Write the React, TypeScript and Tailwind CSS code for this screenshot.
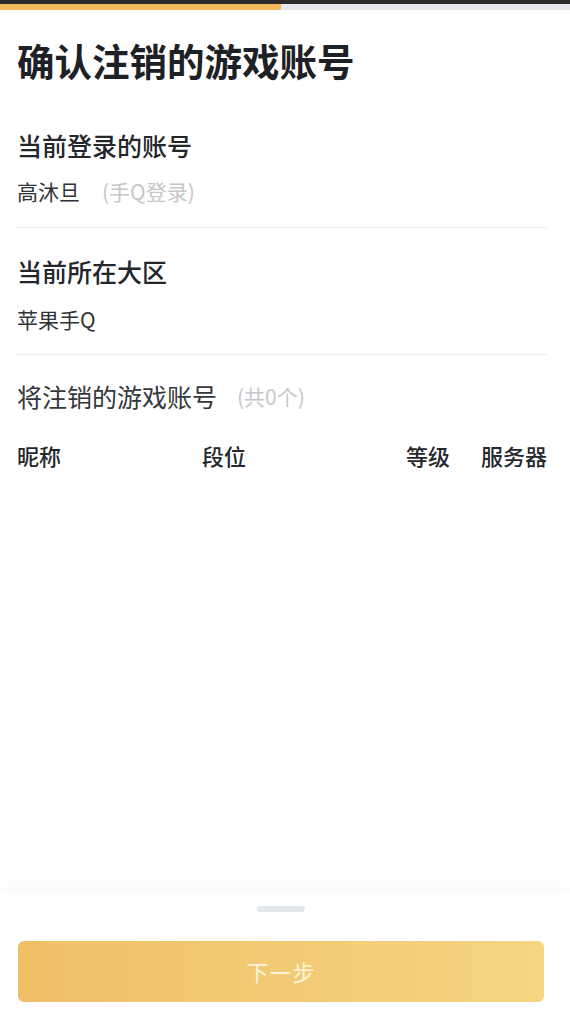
import React from 'react';

const font = { fontFamily: '"Noto Sans CJK SC", "Noto Sans", sans-serif' };

type Col = { label: string };

const columns: Col[] = [{ label: '昵称' }, { label: '段位' }, { label: '等级' }, { label: '服务器' }];

const Divider: React.FC = () => <div className="h-px bg-[#ececec] ml-[-2px]" />;

const App: React.FC = () => {
  return (
    <div className="min-h-screen flex flex-col bg-white" style={font}>
      {/* status + progress */}
      <div className="h-[4px] bg-[#2b2b2b]" />
      <div className="h-[6px] flex bg-[#e4e7ec]">
        <div className="w-[281px] bg-[#f1b95a]" />
      </div>

      <div className="flex-1 pl-[17px] pr-[23px]">
        <h1 className="mt-[28px] text-[37.5px] leading-[44px] font-bold text-[#1d2024]">
          确认注销的游戏账号
        </h1>

        <h2 className="mt-[47px] text-[25px] leading-[32px] font-medium text-[#23262a]">当前登录的账号</h2>
        <div className="mt-[15px] flex items-center text-[21px] leading-[30px]">
          <span className="text-[#2f3236]">高沐旦</span>
          <span className="ml-[22px] text-[#c5c7ca]">(手Q登录)</span>
        </div>
        <div className="mt-[21px]">
          <Divider />
        </div>

        <h2 className="mt-[27px] text-[25px] leading-[32px] font-medium text-[#23262a]">当前所在大区</h2>
        <div className="mt-[17px] text-[21px] leading-[30px] text-[#2f3236]">苹果手Q</div>
        <div className="mt-[20px]">
          <Divider />
        </div>

        <div className="mt-[25px] flex items-center leading-[32px]">
          <span className="text-[25px] text-[#34373b]">将注销的游戏账号</span>
          <span className="ml-[20px] text-[21px] text-[#c5c7ca]">(共0个)</span>
        </div>

        <div className="mt-[28px] grid grid-cols-[185px_1fr_auto_auto] items-center text-[22px] leading-[30px] font-medium text-[#25282c]">
          {columns.map((c, i) => (
            <span key={c.label} className={i === 3 ? 'ml-[31px]' : ''}>
              {c.label}
            </span>
          ))}
        </div>
      </div>

      <div className="h-[116px] shrink-0 bg-white shadow-[0_-8px_14px_rgba(0,0,0,0.025)] flex flex-col items-center pl-[18px] pr-[26px]">
        <div className="mt-[13px] w-[48px] h-[6px] rounded-full bg-[#e3e6eb]" />
        <button className="mt-[29px] w-full h-[61px] rounded-[6px] bg-gradient-to-r from-[#efbf66] to-[#f6d583] text-[22px] text-[#fdf5dc] tracking-[1px]">
          下一步
        </button>
      </div>
    </div>
  );
};

export default App;
